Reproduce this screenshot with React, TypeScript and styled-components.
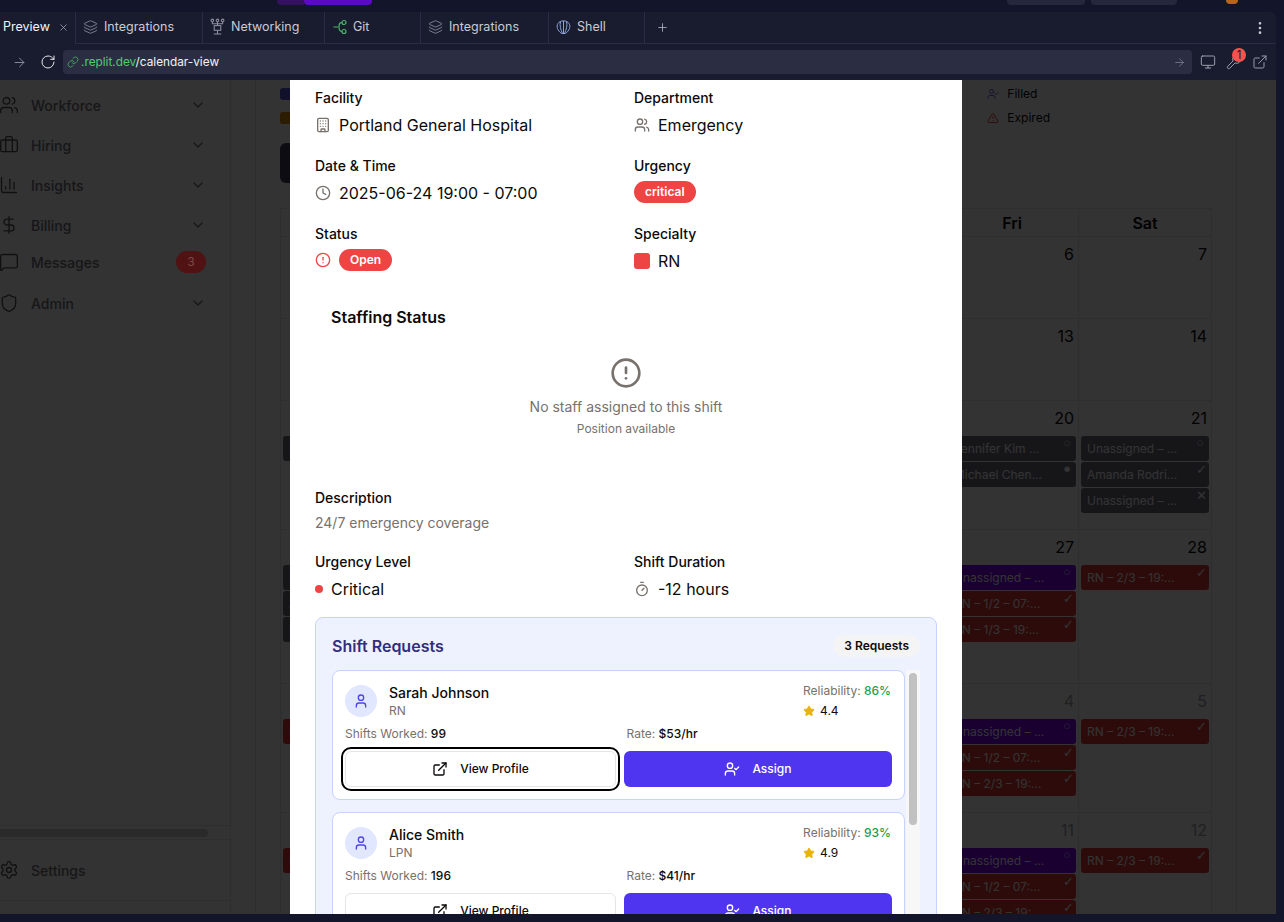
import React from "react";
import styled, { createGlobalStyle } from "styled-components";
import {
  ArrowRight,
  Briefcase,
  Building,
  ChartColumn,
  ChevronDown,
  CircleAlert,
  Clock,
  DollarSign,
  EllipsisVertical,
  ExternalLink,
  Layers,
  Link,
  MessageSquare,
  Monitor,
  Plus,
  RotateCw,
  Settings,
  Shield,
  Star,
  Timer,
  TriangleAlert,
  User,
  UserCheck,
  Users,
  Wrench,
  X,
} from "lucide-react";

const GlobalStyle = createGlobalStyle`
  html, body { margin: 0; padding: 0; height: 100%; background: #13162a; }
  body { font-family: Inter, "Liberation Sans", sans-serif; overflow: hidden; }
  * { box-sizing: border-box; }
`;

const NetworkIcon = () => (
  <svg width="16" height="18" viewBox="0 0 16 18" fill="none" stroke="#8e90a0" strokeWidth="1.1">
    <circle cx="2.5" cy="2" r="1.4" />
    <circle cx="8" cy="2" r="1.4" />
    <circle cx="13.5" cy="2" r="1.4" />
    <path d="M2.5 3.5V5.5H13.5V3.5M8 3.5V7.5" />
    <rect x="4.5" y="7.5" width="7" height="5" />
    <path d="M8 12.5V16M4 16.5H12" />
  </svg>
);

const GitIcon = () => (
  <svg width="14" height="16" viewBox="0 0 14 16" fill="none" stroke="#4fb36b" strokeWidth="1.2">
    <circle cx="11" cy="3.5" r="2" />
    <circle cx="11" cy="12.5" r="2" />
    <path d="M0.5 8H5M9 3.5C6.5 3.5 6 5 6 8C6 11 6.5 12.5 9 12.5" />
  </svg>
);

const ShellIcon = () => (
  <svg width="15" height="16" viewBox="0 0 15 16" fill="none" stroke="#8ea2d8" strokeWidth="1">
    <path d="M5.5 14.5C1.5 11.5 0 7.5 2 4.5C4 1 11 1 13 4.5C15 7.5 13.5 11.5 9.5 14.5Z" />
    <path d="M7.5 14.5V2M6.5 14.5C4.5 10.5 3.5 6 4.5 2.8M8.5 14.5C10.5 10.5 11.5 6 10.5 2.8" />
  </svg>
);

const tabs = [
  { label: "Integrations", width: 127, icon: <Layers size={16} color="#8e90a0" strokeWidth={1.3} /> },
  { label: "Networking", width: 122, icon: <NetworkIcon /> },
  { label: "Git", width: 96, icon: <GitIcon /> },
  { label: "Integrations", width: 128, icon: <Layers size={16} color="#8e90a0" strokeWidth={1.3} /> },
  { label: "Shell", width: 96, icon: <ShellIcon /> },
];

const navItems = [
  { label: "Workforce", icon: <Users size={20} strokeWidth={1.6} />, chevron: true },
  { label: "Hiring", icon: <Briefcase size={20} strokeWidth={1.6} />, chevron: true },
  { label: "Insights", icon: <ChartColumn size={20} strokeWidth={1.6} />, chevron: true },
  { label: "Billing", icon: <DollarSign size={20} strokeWidth={1.6} />, chevron: true },
  { label: "Messages", icon: <MessageSquare size={20} strokeWidth={1.6} />, badge: "3" },
  { label: "Admin", icon: <Shield size={20} strokeWidth={1.6} />, chevron: true },
];

type Tone = "gray" | "purple" | "red";
type CalEvent = { text: string; tone: Tone; mark: string };
type Cell = { day: number; muted?: boolean; events?: CalEvent[] };

const filled = (text: string): CalEvent => ({ text, tone: "red", mark: "✓" });
const unassigned: CalEvent = { text: "Unassigned – ...", tone: "purple", mark: "○" };
const grayShift = (text: string, mark: string): CalEvent => ({ text, tone: "gray", mark });

const plainRow = (from: number, muted = false): Cell[] =>
  Array.from({ length: 7 }, (_, i) => ({ day: from + i, muted }));

const weeks: Cell[][] = [
  plainRow(1),
  plainRow(8),
  [
    { day: 15, events: [grayShift("Sarah Johnson...", "○")] },
    { day: 16 },
    { day: 17 },
    { day: 18 },
    { day: 19 },
    { day: 20, events: [grayShift("Jennifer Kim ...", "○"), grayShift("Michael Chen...", "●")] },
    {
      day: 21,
      events: [grayShift("Unassigned – ...", "○"), grayShift("Amanda Rodri...", "✓"), grayShift("Unassigned – ...", "✕")],
    },
  ],
  [
    {
      day: 22,
      events: [grayShift("Unassigned – ...", "○"), grayShift("Alice Smith ...", "✓"), grayShift("David Lee ...", "✓")],
    },
    { day: 23 },
    { day: 24 },
    { day: 25 },
    { day: 26 },
    { day: 27, events: [unassigned, filled("RN – 1/2 – 07:..."), filled("RN – 1/3 – 19:...")] },
    { day: 28, events: [filled("RN – 2/3 – 19:...")] },
  ],
  [
    { day: 29, events: [filled("RN – 2/3 – 19:...")] },
    { day: 30 },
    { day: 1, muted: true },
    { day: 2, muted: true },
    { day: 3, muted: true },
    { day: 4, muted: true, events: [unassigned, filled("RN – 1/2 – 07:..."), filled("RN – 2/3 – 19:...")] },
    { day: 5, muted: true, events: [filled("RN – 2/3 – 19:...")] },
  ],
  [
    { day: 6, muted: true, events: [filled("RN – 2/3 – 19:...")] },
    { day: 7, muted: true },
    { day: 8, muted: true },
    { day: 9, muted: true },
    { day: 10, muted: true },
    { day: 11, muted: true, events: [unassigned, filled("RN – 1/2 – 07:..."), filled("RN – 2/3 – 19:...")] },
    { day: 12, muted: true, events: [filled("RN – 2/3 – 19:...")] },
  ],
];

const requests = [
  { name: "Sarah Johnson", role: "RN", reliability: "86%", rating: "4.4", shifts: "99", rate: "$53/hr", focused: true },
  { name: "Alice Smith", role: "LPN", reliability: "93%", rating: "4.9", shifts: "196", rate: "$41/hr" },
  { name: "David Lee", role: "RN", reliability: "78%", rating: "4.1", shifts: "64", rate: "$49/hr" },
];

const App = () => {
  return (
    <Screen>
      <GlobalStyle />
      <TopStrip>
        <RunGroup>
          <RunDark />
          <RunBright />
        </RunGroup>
        <StripRight>
          <StripButton $width={78} />
          <StripButton $width={86} />
          <StripAvatar />
        </StripRight>
      </TopStrip>

      <Chrome>
        <TabBar>
          <PreviewTab>
            <span>Preview</span>
            <X size={11} color="#b6b8c4" strokeWidth={1.5} />
          </PreviewTab>
          {tabs.map((tab, i) => (
            <Tab key={i} $width={tab.width}>
              <TabIcon>{tab.icon}</TabIcon>
              {tab.label}
            </Tab>
          ))}
          <AddTab>
            <Plus size={13} color="#b6b8c4" strokeWidth={1.5} />
          </AddTab>
          <TabMenu>
            <EllipsisVertical size={16} color="#c8cad4" strokeWidth={2} />
          </TabMenu>
        </TabBar>
        <UrlRow>
          <ArrowRight size={15} color="#8e90a0" strokeWidth={1.5} />
          <RotateCw size={16} color="#e6e7ec" strokeWidth={1.5} />
          <UrlBar>
            <Link size={12} color="#4fb36b" strokeWidth={1.6} />
            <UrlText>
              <UrlHost>.replit.dev</UrlHost>/calendar-view
            </UrlText>
            <UrlGo>
              <ArrowRight size={13} color="#7c7e90" strokeWidth={1.5} />
            </UrlGo>
          </UrlBar>
          <UrlTools>
            <Monitor size={16} color="#a4a6b4" strokeWidth={1.4} />
            <KeyTool>
              <Wrench size={16} color="#a4a6b4" strokeWidth={1.4} />
              <KeyBadge>1</KeyBadge>
            </KeyTool>
            <ExternalLink size={16} color="#a4a6b4" strokeWidth={1.4} />
          </UrlTools>
        </UrlRow>
      </Chrome>

      <Workspace>
        <Sidebar>
          <Nav>
            {navItems.map((item) => (
              <NavItem key={item.label} $compact={!!item.badge}>
                <NavIcon>{item.icon}</NavIcon>
                <NavLabel>{item.label}</NavLabel>
                {item.chevron && <ChevronDown size={16} color="#71717a" />}
                {item.badge && <NavBadge>{item.badge}</NavBadge>}
              </NavItem>
            ))}
          </Nav>
          <SideScroll>
            <SideThumb />
          </SideScroll>
          <SideFooter>
            <NavIcon>
              <Settings size={20} strokeWidth={1.6} />
            </NavIcon>
            <NavLabel>Settings</NavLabel>
          </SideFooter>
        </Sidebar>

        <Gutter />

        <CalendarPage>
          <LegendRow>
            <Swatches>
              <Swatch $color="#5458d8" />
              <Swatch $color="#d98a06" />
            </Swatches>
            <LegendNotes>
              <LegendNote>
                <UserCheck size={12} color="#6366f1" />
                Filled
              </LegendNote>
              <LegendNote>
                <TriangleAlert size={12} color="#ef4444" />
                Expired
              </LegendNote>
            </LegendNotes>
          </LegendRow>
          <TodayButton />
          <Grid>
            {["Sun", "Mon", "Tue", "Wed", "Thu", "Fri", "Sat"].map((d) => (
              <HeadCell key={d}>{d}</HeadCell>
            ))}
            {weeks.flat().map((cell, i) => (
              <DayCell key={i}>
                <DayNumber $muted={cell.muted}>{cell.day}</DayNumber>
                <EventStack>
                  {cell.events?.map((ev, j) => (
                    <EventChip key={j} $tone={ev.tone}>
                      {ev.text}
                      <EventMark $dot={ev.mark === "○" || ev.mark === "●"}>{ev.mark}</EventMark>
                    </EventChip>
                  ))}
                </EventStack>
              </DayCell>
            ))}
          </Grid>
        </CalendarPage>

        <Overlay />

        <Modal>
          <FieldGrid>
            <Field>
              <FieldLabel>Facility</FieldLabel>
              <FieldValue>
                <Building size={16} color="#78716c" />
                Portland General Hospital
              </FieldValue>
            </Field>
            <Field>
              <FieldLabel>Department</FieldLabel>
              <FieldValue>
                <Users size={16} color="#78716c" />
                Emergency
              </FieldValue>
            </Field>
            <Field>
              <FieldLabel>Date &amp; Time</FieldLabel>
              <FieldValue>
                <Clock size={16} color="#78716c" />
                2025-06-24 19:00 - 07:00
              </FieldValue>
            </Field>
            <Field>
              <FieldLabel>Urgency</FieldLabel>
              <BadgeValue>
                <RedPill>critical</RedPill>
              </BadgeValue>
            </Field>
            <Field>
              <FieldLabel>Status</FieldLabel>
              <BadgeValue>
                <CircleAlert size={16} color="#ef4444" />
                <RedPill>Open</RedPill>
              </BadgeValue>
            </Field>
            <Field>
              <FieldLabel>Specialty</FieldLabel>
              <FieldValue>
                <SpecialtySwatch />
                RN
              </FieldValue>
            </Field>
          </FieldGrid>

          <StaffingCard>
            <StaffingTitle>Staffing Status</StaffingTitle>
            <EmptyState>
              <CircleAlert size={32} color="#78716c" strokeWidth={2} />
              <EmptyTitle>No staff assigned to this shift</EmptyTitle>
              <EmptyHint>Position available</EmptyHint>
            </EmptyState>
          </StaffingCard>

          <FieldLabel>Description</FieldLabel>
          <DescriptionText>24/7 emergency coverage</DescriptionText>

          <DurationGrid>
            <div>
              <FieldLabel>Urgency Level</FieldLabel>
              <DurationValue>
                <RedDot />
                Critical
              </DurationValue>
            </div>
            <div>
              <FieldLabel>Shift Duration</FieldLabel>
              <DurationValue>
                <Timer size={16} color="#78716c" />
                -12 hours
              </DurationValue>
            </div>
          </DurationGrid>

          <RequestsPanel>
            <RequestsHead>
              <RequestsTitle>Shift Requests</RequestsTitle>
              <CountPill>3 Requests</CountPill>
            </RequestsHead>
            <RequestScroller>
              <RequestList>
                {requests.map((r) => (
                  <RequestCard key={r.name}>
                    <RequestTop>
                      <Person>
                        <Avatar>
                          <User size={16} color="#4f46e5" />
                        </Avatar>
                        <div>
                          <PersonName>{r.name}</PersonName>
                          <PersonRole>{r.role}</PersonRole>
                        </div>
                      </Person>
                      <Scores>
                        <ScoreLine>
                          Reliability: <Percent>{r.reliability}</Percent>
                        </ScoreLine>
                        <Rating>
                          <Star size={12} color="#eab308" fill="#eab308" />
                          {r.rating}
                        </Rating>
                      </Scores>
                    </RequestTop>
                    <Stats>
                      <ScoreLine>
                        Shifts Worked: <StatValue>{r.shifts}</StatValue>
                      </ScoreLine>
                      <ScoreLine>
                        Rate: <StatValue>{r.rate}</StatValue>
                      </ScoreLine>
                    </Stats>
                    <Actions>
                      <ProfileButton $focused={r.focused}>
                        <ExternalLink size={16} />
                        View Profile
                      </ProfileButton>
                      <AssignButton>
                        <UserCheck size={16} />
                        Assign
                      </AssignButton>
                    </Actions>
                  </RequestCard>
                ))}
              </RequestList>
              <ScrollTrack>
                <ScrollThumb />
              </ScrollTrack>
            </RequestScroller>
          </RequestsPanel>
        </Modal>
      </Workspace>
    </Screen>
  );
};

const Screen = styled.div`
  width: 1284px;
  height: 922px;
  background: #13162a;
  overflow: hidden;
`;

const TopStrip = styled.div`
  height: 12px;
  display: flex;
  justify-content: space-between;
  align-items: flex-start;
  padding-left: 277px;
  padding-right: 46px;
`;

const RunGroup = styled.div`
  display: flex;
  height: 5px;
`;

const RunDark = styled.div`
  width: 27px;
  background: #33115e;
  border-radius: 0 0 0 4px;
`;

const RunBright = styled.div`
  width: 68px;
  background: #5a0ac4;
  border-radius: 0 0 4px 4px;
`;

const StripRight = styled.div`
  display: flex;
  gap: 6px;
`;

const StripButton = styled.div<{ $width: number }>`
  width: ${(p) => p.$width}px;
  height: 5px;
  background: #25283c;
  border-radius: 0 0 4px 4px;
`;

const StripAvatar = styled.div`
  width: 12px;
  height: 4px;
  margin-left: 43px;
  background: #b5651d;
  border-radius: 0 0 6px 6px;
`;

const Chrome = styled.div`
  width: 1276px;
  height: 68px;
  background: #191c2e;
  border-radius: 0 6px 0 0;
`;

const TabBar = styled.div`
  height: 32px;
  display: flex;
  align-items: stretch;
  color: #c9cbd6;
  font-size: 12.5px;
  line-height: 30px;
`;

const PreviewTab = styled.div`
  width: 76px;
  flex: none;
  display: flex;
  align-items: center;
  justify-content: space-between;
  padding: 0 6px 2px 3px;
  color: #f2f3f6;
  border-right: 1px solid #2b2e42;
`;

const Tab = styled.div<{ $width: number }>`
  width: ${(p) => p.$width}px;
  flex: none;
  display: flex;
  align-items: center;
  gap: 6px;
  padding-left: 7px;
  padding-bottom: 1px;
  border-right: 1px solid #2b2e42;
  border-bottom: 1px solid #2b2e42;
`;

const TabIcon = styled.span`
  display: flex;
  width: 15px;
  justify-content: center;
`;

const AddTab = styled.div`
  width: 34px;
  display: flex;
  align-items: center;
  justify-content: center;
  border-bottom: 1px solid #2b2e42;
`;

const TabMenu = styled.div`
  flex: 1;
  display: flex;
  align-items: center;
  justify-content: flex-end;
  padding-right: 8px;
  border-bottom: 1px solid #2b2e42;
`;

const UrlRow = styled.div`
  height: 36px;
  display: flex;
  align-items: center;
  padding-left: 12px;
  gap: 13px;
`;

const UrlBar = styled.div`
  width: 1129px;
  height: 24px;
  margin-left: -6px;
  display: flex;
  align-items: center;
  gap: 2px;
  padding: 0 6px 0 4px;
  background: #2b2e42;
  border-radius: 4px;
`;

const UrlText = styled.span`
  flex: 1;
  color: #f2f3f6;
  font-size: 11.8px;
`;

const UrlHost = styled.span`
  color: #4ccf6f;
`;

const UrlGo = styled.span`
  display: flex;
`;

const UrlTools = styled.div`
  display: flex;
  align-items: center;
  gap: 10px;
  margin-left: -5px;
`;

const KeyTool = styled.span`
  position: relative;
  display: flex;
`;

const KeyBadge = styled.span`
  position: absolute;
  top: -6px;
  left: 6px;
  width: 14px;
  height: 14px;
  border-radius: 50%;
  background: #f9524e;
  color: #1a1c2c;
  font-size: 12px;
  line-height: 14px;
  text-align: center;
`;

const Workspace = styled.div`
  position: relative;
  width: 1276px;
  height: 834px;
  display: flex;
  background: #fff;
  overflow: hidden;
`;

const Sidebar = styled.aside`
  width: 231px;
  flex: none;
  display: flex;
  flex-direction: column;
  border-right: 1px solid #e4e4e7;
`;

const Nav = styled.nav`
  flex: 1;
  width: 207px;
  margin-left: -1px;
  padding-top: 5px;
`;

const NavItem = styled.div<{ $compact?: boolean }>`
  height: ${(p) => (p.$compact ? 34 : 40)}px;
  margin-bottom: ${(p) => (p.$compact ? 4 : 0)}px;
  display: flex;
  align-items: center;
  gap: 12px;
  color: #71717a;
`;

const NavIcon = styled.span`
  display: flex;
  color: #52525b;
`;

const NavLabel = styled.span`
  flex: 1;
  font-size: 14px;
  font-weight: 500;
`;

const NavBadge = styled.span`
  position: relative;
  z-index: 2;
  width: 30px;
  height: 22px;
  border-radius: 11px;
  background: #501212;
  color: #7a4a4a;
  font-size: 12px;
  line-height: 22px;
  text-align: center;
`;

const SideScroll = styled.div`
  height: 15px;
  padding-top: 3px;
  border-top: 1px solid #e4e4e7;
  border-bottom: 1px solid #e4e4e7;
`;

const SideThumb = styled.div`
  width: 208px;
  height: 8px;
  border-radius: 0 4px 4px 0;
  background: #cfcfcf;
`;

const SideFooter = styled.div`
  height: 61px;
  margin: 0 0 13px -1px;
  display: flex;
  align-items: center;
  gap: 12px;
  color: #71717a;
  border-bottom: 1px solid #e4e4e7;
`;

const Gutter = styled.div`
  width: 25px;
  flex: none;
  border-right: 1px solid #e4e4e7;
`;

const CalendarPage = styled.main`
  width: 981px;
  flex: none;
  padding: 8px 24px 0;
  border-right: 1px solid #e4e4e7;
`;

const LegendRow = styled.div`
  height: 36px;
  display: flex;
  justify-content: space-between;
  width: 932px;
  padding-right: 162px;
`;

const Swatches = styled.div`
  display: flex;
  flex-direction: column;
  gap: 12px;
`;

const Swatch = styled.div<{ $color: string }>`
  width: 24px;
  height: 12px;
  border-radius: 3px;
  background: ${(p) => p.$color};
`;

const LegendNotes = styled.div`
  display: flex;
  flex-direction: column;
  gap: 8px;
  margin-top: -2px;
`;

const LegendNote = styled.div`
  height: 16px;
  display: flex;
  align-items: center;
  gap: 8px;
  font-size: 12px;
  color: #09090b;
  line-height: 16px;
`;

const TodayButton = styled.div`
  width: 90px;
  height: 40px;
  margin: 19px 0 25px;
  border-radius: 6px;
  background: #3c3c5a;
`;

const Grid = styled.div`
  width: 932px;
  display: grid;
  grid-template-columns: repeat(7, 133px);
  grid-template-rows: 28px 82px 82px 129px 154px 129px 129px;
  border-top: 1px solid #e4e4e7;
  border-left: 1px solid #e4e4e7;
`;

const HeadCell = styled.div`
  display: flex;
  align-items: center;
  justify-content: center;
  font-size: 16px;
  font-weight: 600;
  color: #09090b;
  border-right: 1px solid #e4e4e7;
  border-bottom: 1px solid #e4e4e7;
`;

const DayCell = styled.div`
  padding: 5px 2px 0;
  border-right: 1px solid #e4e4e7;
  border-bottom: 1px solid #e4e4e7;
`;

const DayNumber = styled.div<{ $muted?: boolean }>`
  height: 24px;
  margin-bottom: 6px;
  padding-right: 2px;
  text-align: right;
  font-size: 16px;
  line-height: 24px;
  color: ${(p) => (p.$muted ? "#a1a1aa" : "#09090b")};
`;

const EventStack = styled.div`
  display: flex;
  flex-direction: column;
  gap: 1px;
`;

const toneColor = { gray: "#6e6e7e", purple: "#7c00f5", red: "#dc3a32" };

const EventChip = styled.div<{ $tone: Tone }>`
  position: relative;
  height: 25px;
  padding: 0 6px;
  border-radius: 3px;
  background: ${(p) => toneColor[p.$tone]};
  color: #fff;
  font-size: 12px;
  line-height: 25px;
  white-space: nowrap;
  overflow: hidden;
`;

const EventMark = styled.span<{ $dot?: boolean }>`
  position: absolute;
  top: 0;
  right: ${(p) => (p.$dot ? 6 : 2)}px;
  height: 15px;
  font-family: "DejaVu Sans", sans-serif;
  font-size: ${(p) => (p.$dot ? 7 : 13)}px;
  line-height: 15px;
`;

const Overlay = styled.div`
  position: absolute;
  inset: 0;
  z-index: 1;
  background: rgba(0, 0, 0, 0.8);
`;

const Modal = styled.div`
  position: absolute;
  z-index: 2;
  top: 0;
  bottom: 0;
  left: 290px;
  width: 672px;
  padding: 8px 25px 0;
  background: #fff;
  overflow: hidden;
  color: #0c0a09;
`;

const FieldGrid = styled.div`
  display: grid;
  grid-template-columns: 303px 303px;
  column-gap: 16px;
  row-gap: 18px;
`;

const Field = styled.div``;

const FieldLabel = styled.div`
  font-size: 14px;
  font-weight: 500;
  line-height: 20px;
`;

const FieldValue = styled.div`
  height: 26px;
  margin-top: 4px;
  display: flex;
  align-items: center;
  gap: 8px;
  font-size: 16px;
`;

const BadgeValue = styled(FieldValue)`
  height: 22px;
  margin-top: 5px;
  margin-bottom: 3px;
`;

const RedPill = styled.span`
  padding: 0 11px;
  height: 22px;
  border-radius: 11px;
  background: #ef4444;
  color: #fff;
  font-size: 12px;
  font-weight: 600;
  line-height: 22px;
`;

const SpecialtySwatch = styled.span`
  width: 16px;
  height: 16px;
  border-radius: 3px;
  background: #ef4444;
`;

const StaffingCard = styled.section`
  margin-top: 15px;
  padding: 16px;
`;

const StaffingTitle = styled.h3`
  margin: 0;
  font-size: 16px;
  font-weight: 600;
  line-height: 24px;
`;

const EmptyState = styled.div`
  padding: 28px 0 35px;
  display: flex;
  flex-direction: column;
  align-items: center;
`;

const EmptyTitle = styled.div`
  margin-top: 8px;
  font-size: 14px;
  line-height: 20px;
  color: #78716c;
`;

const EmptyHint = styled.div`
  margin-top: 4px;
  font-size: 12px;
  line-height: 16px;
  color: #78716c;
`;

const DescriptionText = styled.div`
  margin-top: 5px;
  font-size: 14px;
  line-height: 20px;
  color: #78716c;
`;

const DurationGrid = styled.div`
  margin-top: 19px;
  display: grid;
  grid-template-columns: 303px 303px;
  column-gap: 16px;
`;

const DurationValue = styled.div`
  margin-top: 5px;
  height: 24px;
  display: flex;
  align-items: center;
  gap: 8px;
  font-size: 16px;
`;

const RedDot = styled.span`
  width: 8px;
  height: 8px;
  border-radius: 50%;
  background: #ef4444;
`;

const RequestsPanel = styled.section`
  margin-top: 16px;
  padding: 16px;
  background: #eef2ff;
  border: 1px solid #c7d2fe;
  border-radius: 8px;
`;

const RequestsHead = styled.div`
  height: 24px;
  margin-bottom: 12px;
  display: flex;
  align-items: center;
  justify-content: space-between;
`;

const RequestsTitle = styled.h3`
  margin: 0;
  font-size: 16px;
  font-weight: 600;
  color: #312e81;
`;

const CountPill = styled.span`
  height: 22px;
  padding: 0 11px;
  border-radius: 11px;
  background: #f4f4f5;
  font-size: 12px;
  font-weight: 600;
  line-height: 22px;
`;

const RequestScroller = styled.div`
  height: 256px;
  display: flex;
  gap: 1px;
  overflow: hidden;
`;

const RequestList = styled.div`
  width: 573px;
  flex: none;
  display: flex;
  flex-direction: column;
  gap: 12px;
`;

const ScrollTrack = styled.div`
  width: 14px;
  padding: 3px;
  background: #f7f7f7;
`;

const ScrollThumb = styled.div`
  width: 8px;
  height: 152px;
  border-radius: 4px;
  background: #c1c1c1;
`;

const RequestCard = styled.article`
  flex: none;
  height: 130px;
  padding: 12px;
  background: #fff;
  border: 1px solid #c7d2fe;
  border-radius: 8px;
`;

const RequestTop = styled.div`
  display: flex;
  justify-content: space-between;
  padding-right: 1px;
`;

const Person = styled.div`
  display: flex;
  align-items: center;
  gap: 12px;
`;

const Avatar = styled.div`
  width: 32px;
  height: 32px;
  border-radius: 50%;
  background: #e0e7ff;
  display: flex;
  align-items: center;
  justify-content: center;
`;

const PersonName = styled.div`
  font-size: 14px;
  font-weight: 500;
  line-height: 20px;
`;

const PersonRole = styled.div`
  font-size: 12px;
  line-height: 16px;
  color: #78716c;
`;

const Scores = styled.div`
  display: flex;
  flex-direction: column;
  gap: 4px;
`;

const ScoreLine = styled.div`
  font-size: 12px;
  line-height: 16px;
  color: #78716c;
`;

const Percent = styled.span`
  color: #16a34a;
  font-weight: 500;
`;

const Rating = styled.div`
  display: flex;
  align-items: center;
  gap: 5px;
  font-size: 12px;
  line-height: 16px;
`;

const Stats = styled.div`
  margin-top: 7px;
  display: grid;
  grid-template-columns: 1fr 1fr;
  column-gap: 16px;
`;

const StatValue = styled.span`
  color: #0c0a09;
  font-weight: 500;
`;

const Actions = styled.div`
  margin-top: 9px;
  display: grid;
  grid-template-columns: 1.01fr 1fr;
  column-gap: 8px;
`;

const ActionButton = styled.button`
  height: 36px;
  padding: 0 0 1px;
  display: flex;
  align-items: center;
  justify-content: center;
  gap: 12px;
  border-radius: 6px;
  font-family: inherit;
  font-size: 12px;
  font-weight: 500;
`;

const ProfileButton = styled(ActionButton)<{ $focused?: boolean }>`
  background: #fff;
  color: #0c0a09;
  border: 1px solid #e7e5e4;
  outline: ${(p) => (p.$focused ? "2px solid #000" : "none")};
  outline-offset: 2px;
`;

const AssignButton = styled(ActionButton)`
  background: #4f35f0;
  color: #fff;
  border: none;
`;

export default App;
